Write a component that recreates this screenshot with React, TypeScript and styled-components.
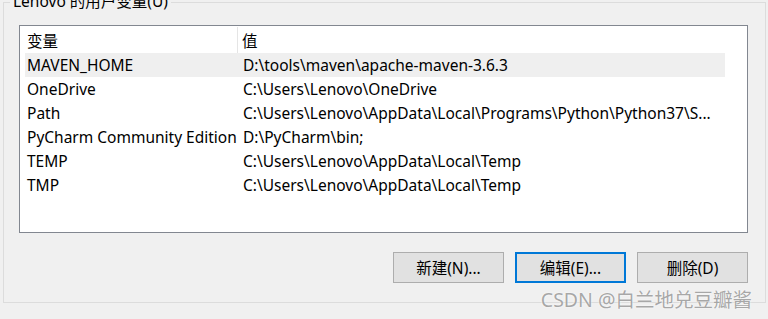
import styled, { createGlobalStyle } from 'styled-components';

const GlobalStyle = createGlobalStyle`
  html, body {
    margin: 0;
    padding: 0;
    background: #f0f0f0;
    overflow: hidden;
  }
  body {
    font-family: 'Noto Sans', 'Noto Sans CJK SC', sans-serif;
    font-size: 15.5px;
    color: #000;
  }
`;

interface EnvVar {
  name: string;
  value: string;
}

const userVars: EnvVar[] = [
  { name: 'MAVEN_HOME', value: 'D:\\tools\\maven\\apache-maven-3.6.3' },
  { name: 'OneDrive', value: 'C:\\Users\\Lenovo\\OneDrive' },
  {
    name: 'Path',
    value: 'C:\\Users\\Lenovo\\AppData\\Local\\Programs\\Python\\Python37\\S...',
  },
  { name: 'PyCharm Community Edition', value: 'D:\\PyCharm\\bin;' },
  { name: 'TEMP', value: 'C:\\Users\\Lenovo\\AppData\\Local\\Temp' },
  { name: 'TMP', value: 'C:\\Users\\Lenovo\\AppData\\Local\\Temp' },
];

const Screen = styled.div`
  width: 768px;
  height: 319px;
  padding: 2px 0 0 3px;
  box-sizing: border-box;
  position: relative;
`;

const GroupBox = styled.section`
  position: relative;
  width: 763px;
  box-sizing: border-box;
  border: 1px solid #dcdcdc;
  padding: 22px 17px 19px 15px;
`;

const GroupTitle = styled.span`
  position: absolute;
  top: -12px;
  left: 6px;
  padding: 0 3px;
  background: #f0f0f0;
  line-height: 20px;
`;

const ListBox = styled.div`
  width: 729px;
  height: 208px;
  box-sizing: border-box;
  border: 1px solid #828790;
  background: #fff;
`;

const Table = styled.div`
  width: 705px;
  display: flex;
  flex-direction: column;
`;

const HeaderRow = styled.div`
  display: flex;
  height: 27px;
  align-items: center;
`;

const HeaderCell = styled.div<{ $width?: number; $divider?: boolean }>`
  box-sizing: border-box;
  height: 26px;
  margin-top: 1px;
  display: flex;
  align-items: center;
  ${({ $width }) => ($width ? `width: ${$width}px;` : 'flex: 1;')}
  padding-left: ${({ $divider }) => ($divider ? '7px' : '4px')};
  border-right: ${({ $divider }) => ($divider ? '1px solid #e5e5e5' : 'none')};
`;

const Row = styled.div<{ $selected?: boolean }>`
  display: flex;
  height: 24px;
  align-items: center;
  margin-left: 5px;
  background: ${({ $selected }) => ($selected ? '#efefef' : 'transparent')};
`;

const Cell = styled.div<{ $width?: number }>`
  box-sizing: border-box;
  white-space: nowrap;
  overflow: hidden;
  ${({ $width }) => ($width ? `width: ${$width}px; padding-left: 2px;` : 'flex: 1; padding-left: 5px;')}
`;

const ButtonBar = styled.div`
  display: flex;
  justify-content: flex-end;
  gap: 11px;
  margin-top: 19px;
`;

const DialogButton = styled.button<{ $focused?: boolean }>`
  width: 111px;
  height: 31px;
  box-sizing: border-box;
  font-family: inherit;
  font-size: 15.5px;
  color: #000;
  background: #e1e1e1;
  border: ${({ $focused }) => ($focused ? '2px solid #0078d7' : '1px solid #adadad')};
  padding: 0;
  cursor: default;
`;

const Watermark = styled.span`
  position: absolute;
  right: 16px;
  bottom: 6px;
  font-size: 19.5px;
  color: rgba(140, 140, 140, 0.75);
  text-shadow: 0 0 2px #fff;
`;

export default function App() {
  return (
    <Screen>
      <GlobalStyle />
      <GroupBox>
        <GroupTitle>Lenovo 的用户变量(U)</GroupTitle>
        <ListBox>
          <Table>
            <HeaderRow>
              <HeaderCell $width={218} $divider>
                变量
              </HeaderCell>
              <HeaderCell>值</HeaderCell>
            </HeaderRow>
            {userVars.map((v, i) => (
              <Row key={v.name} $selected={i === 0}>
                <Cell $width={213}>{v.name}</Cell>
                <Cell>{v.value}</Cell>
              </Row>
            ))}
          </Table>
        </ListBox>
        <ButtonBar>
          <DialogButton>新建(N)...</DialogButton>
          <DialogButton $focused>编辑(E)...</DialogButton>
          <DialogButton>删除(D)</DialogButton>
        </ButtonBar>
      </GroupBox>
      <Watermark>CSDN @白兰地兑豆瓣酱</Watermark>
    </Screen>
  );
}
